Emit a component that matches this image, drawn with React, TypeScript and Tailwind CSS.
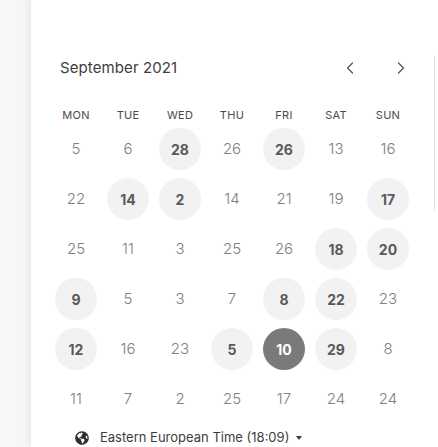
import React from "react";
import { ChevronLeft, ChevronRight } from "lucide-react";
import { FaGlobeAmericas } from "react-icons/fa";

type Day = { n: number; mark?: boolean; sel?: boolean };

const weekdays = ["MON", "TUE", "WED", "THU", "FRI", "SAT", "SUN"];

const rows: Day[][] = [
    [{ n: 5 }, { n: 6 }, { n: 28, mark: true }, { n: 26 }, { n: 26, mark: true }, { n: 13 }, { n: 16 }],
    [{ n: 22 }, { n: 14, mark: true }, { n: 2, mark: true }, { n: 14 }, { n: 21 }, { n: 19 }, { n: 17, mark: true }],
    [{ n: 25 }, { n: 11 }, { n: 3 }, { n: 25 }, { n: 26 }, { n: 18, mark: true }, { n: 20, mark: true }],
    [{ n: 9, mark: true }, { n: 5 }, { n: 3 }, { n: 7 }, { n: 8, mark: true }, { n: 22, mark: true }, { n: 23 }],
    [{ n: 12, mark: true }, { n: 16 }, { n: 23 }, { n: 5, mark: true }, { n: 10, sel: true }, { n: 29, mark: true }, { n: 8 }],
    [{ n: 11 }, { n: 7 }, { n: 2 }, { n: 25 }, { n: 17 }, { n: 24 }, { n: 24 }],
];

const DayCell = ({ d }: { d: Day }) => {
    if (d.sel) {
        return (
            <div className="h-[50px] flex items-center justify-center">
                <span className="w-[42px] h-[42px] rounded-full bg-[#7a7a7a] text-white font-bold text-[14px] flex items-center justify-center">
                    {d.n}
                </span>
            </div>
        );
    }
    if (d.mark) {
        return (
            <div className="h-[50px] flex items-center justify-center">
                <span className="w-[42px] h-[42px] rounded-full bg-[#f2f2f2] text-[#5a5a5a] font-bold text-[14px] flex items-center justify-center">
                    {d.n}
                </span>
            </div>
        );
    }
    return (
        <div className="h-[50px] flex items-center justify-center text-[15px] font-light text-[#7e7e7e]">
            {d.n}
        </div>
    );
};

const App = () => {
    return (
        <div
            className="flex w-[438px] h-[447px] overflow-hidden bg-[#f7f7f7]"
            style={{ fontFamily: "Inter, 'Noto Sans', sans-serif" }}
        >
            <div className="w-[30px] shrink-0" />
            <div className="flex-1 flex bg-white shadow-[-3px_0_6px_rgba(0,0,0,0.05)] border-l border-[#ececec]">
                <div className="w-[403px] pl-[19px] pt-[50px]">
                    {/* header */}
                    <div className="flex items-center w-[367px] h-[36px]">
                        <h3 className="pl-[10px] text-[15px] text-[#3d3d3d] tracking-[0.1px]">
                            September 2021
                        </h3>
                        <div className="ml-auto flex flex-row gap-[19px]">
                            <button type="button" className="w-[32px] h-[32px] flex items-center justify-center text-[#555]">
                                <ChevronLeft size={20} strokeWidth={1.5} />
                            </button>
                            <button type="button" className="w-[32px] h-[32px] flex items-center justify-center text-[#555]">
                                <ChevronRight size={20} strokeWidth={1.5} />
                            </button>
                        </div>
                    </div>

                    <div className="grid grid-cols-[repeat(7,52px)] mt-[21px] h-[16px]">
                        {weekdays.map((w) => (
                            <span key={w} className="text-[11px] leading-[16px] text-[#4a4a4a] text-center tracking-wide">
                                {w}
                            </span>
                        ))}
                    </div>

                    <div className="grid grid-cols-[repeat(7,52px)] mt-[1px]">
                        {rows.map((r, i) => r.map((d, j) => <DayCell key={`${i}-${j}`} d={d} />))}
                    </div>

                    <div className="flex flex-row items-center gap-[11px] mt-[4px] pl-[25px] h-[20px] text-[13px] text-[#3d3d3d]">
                        <FaGlobeAmericas className="text-[14px] text-[#2e2e2e]" />
                        <span>Eastern European Time (18:09)</span>
                        <span className="w-0 h-0 border-x-[3.5px] border-x-transparent border-t-[4px] border-t-[#3d3d3d] -ml-[4px]" />
                    </div>
                </div>
                <div className="w-px h-[155px] mt-[55px] bg-[#e2e2e2]" />
            </div>
        </div>
    );
};

export default App;
